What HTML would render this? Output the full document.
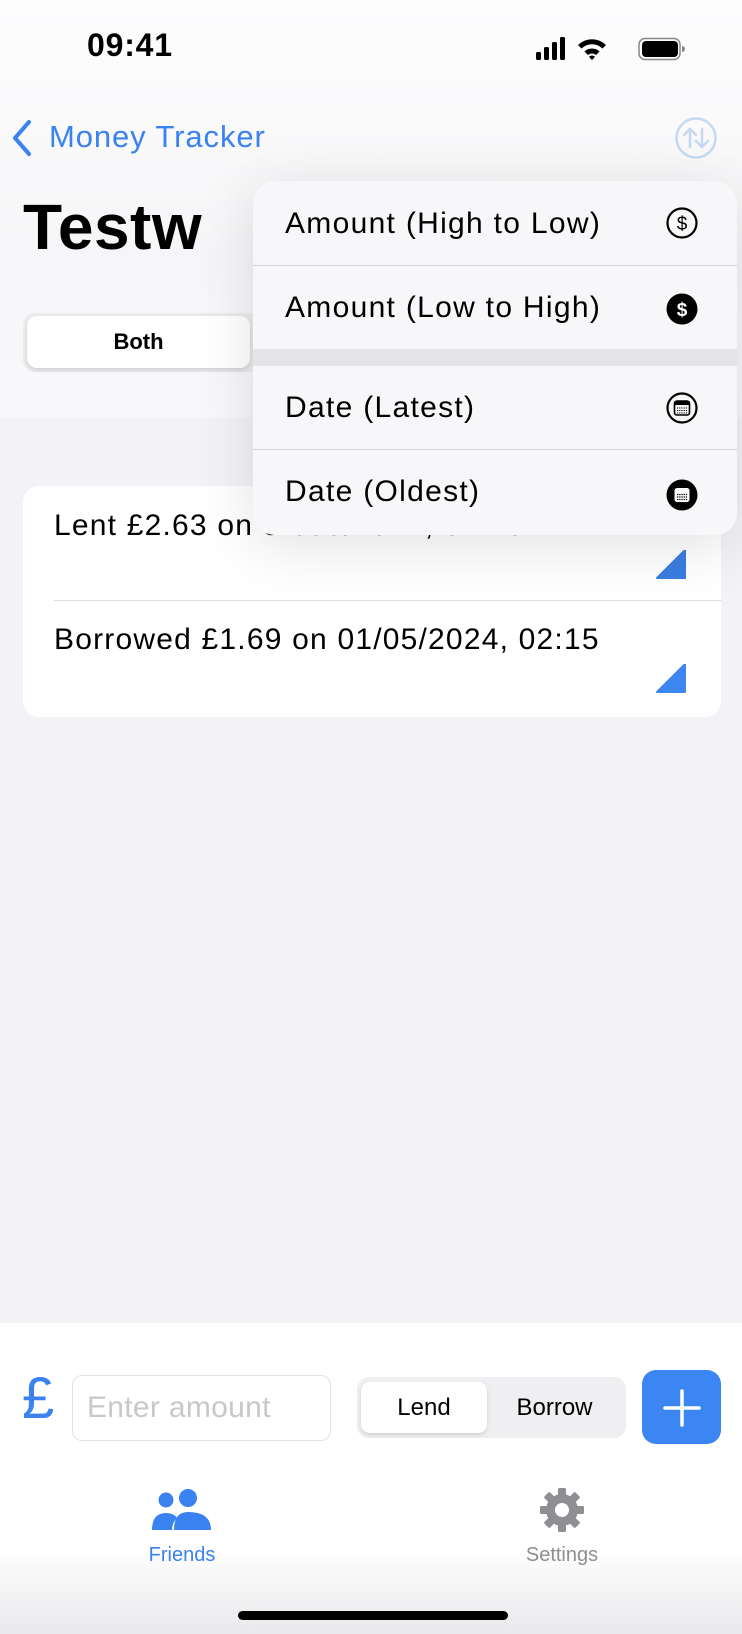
<!DOCTYPE html>
<html><head><meta charset="utf-8"><style>
*{margin:0;padding:0;box-sizing:border-box}
body{width:742px;height:1634px;position:relative;overflow:hidden;background:#f3f3f7;font-family:"Liberation Sans",sans-serif;color:#000}
.abs{position:absolute;white-space:nowrap}
</style></head><body>
<div class="abs" style="left:0;top:0;width:742px;height:417px;background:linear-gradient(#fdfdfe,#f6f6f8 60%,#f8f8fa)"></div>
<div class="abs" style="left:87px;top:27px;font-size:32px;font-weight:bold;letter-spacing:0.8px">09:41</div>
<svg class="abs" style="left:536px;top:36px" width="150" height="26" viewBox="0 0 150 26">
<rect x="0" y="16" width="5" height="8" rx="1.5"/><rect x="8" y="11" width="5" height="13" rx="1.5"/><rect x="16" y="6" width="5" height="18" rx="1.5"/><rect x="24" y="1" width="5" height="23" rx="1.5"/>
<path d="M42 9 A20 20 0 0 1 70 9 L66.5 12.5 A15 15 0 0 0 45.5 12.5Z M48.5 15.5 A11 11 0 0 1 63.5 15.5 L60 19 A6 6 0 0 0 52 19Z M56 24 L53 20.8 A4 4 0 0 1 59 20.8Z"/>
<rect x="103" y="2.5" width="41" height="21" rx="6" fill="none" stroke="#888" stroke-width="1.5"/><rect x="106" y="5" width="36" height="16" rx="4"/><path d="M146 10 v6 a3 3 0 0 0 0 -6z" fill="#888"/>
</svg>
<svg class="abs" style="left:10px;top:118px" width="24" height="40" viewBox="0 0 24 40"><path d="M19 4 L5 20 L19 36" fill="none" stroke="#3a82f0" stroke-width="4" stroke-linecap="round" stroke-linejoin="round"/></svg>
<div class="abs" style="left:49px;top:119px;font-size:31px;letter-spacing:0.9px;color:#3a82f0">Money Tracker</div>
<svg class="abs" style="left:674px;top:116px" width="44" height="44" viewBox="0 0 44 44"><circle cx="22" cy="22" r="19.5" fill="none" stroke="#c6d9f2" stroke-width="2.5"/><path d="M16 31V13M10 19l6-6 6 6M28 13v18M22 25l6 6 6-6" fill="none" stroke="#c6d9f2" stroke-width="2.5" stroke-linecap="round" stroke-linejoin="round"/></svg>
<div class="abs" style="left:23px;top:190px;font-size:64px;font-weight:bold;letter-spacing:0.5px">Testw</div>
<div class="abs" style="left:23px;top:313px;width:260px;height:59px;border-radius:12px;background:#ececef"></div>
<div class="abs" style="left:27px;top:316px;width:223px;height:52px;border-radius:10px;background:#fff;box-shadow:0 2px 4px rgba(0,0,0,.12);text-align:center;line-height:52px;font-size:22px;font-weight:bold">Both</div>
<div class="abs" style="left:23px;top:486px;width:698px;height:231px;border-radius:16px;background:#fff"></div>
<div class="abs" style="left:54px;top:509px;font-size:30px;letter-spacing:1.2px">Lent £2.63 on 01/05/2024, 02:15</div>
<svg class="abs" style="left:655px;top:550px" width="32" height="30"><path d="M30 0 V28 H2 Z" fill="#3a7de0" stroke="#3a7de0" stroke-width="2" stroke-linejoin="round"/></svg>
<div class="abs" style="left:54px;top:600px;width:667px;height:1px;background:#ddd"></div>
<div class="abs" style="left:54px;top:623px;font-size:30px;letter-spacing:1.2px">Borrowed £1.69 on 01/05/2024, 02:15</div>
<svg class="abs" style="left:655px;top:664px" width="32" height="30"><path d="M30 0 V28 H2 Z" fill="#3d86f0" stroke="#3d86f0" stroke-width="2" stroke-linejoin="round"/></svg>
<div class="abs" style="left:253px;top:181px;width:484px;height:354px;border-radius:22px;background:#f7f7f9;box-shadow:0 10px 60px rgba(0,0,0,.12);overflow:hidden">
 <div style="height:85px;line-height:85px;padding-left:32px;font-size:30px;letter-spacing:1.3px;border-bottom:1px solid #d4d4d8">Amount (High to Low)</div>
 <div style="height:83px;line-height:83px;padding-left:32px;font-size:30px;letter-spacing:1.3px">Amount (Low to High)</div>
 <div style="height:17px;background:#e4e4e8"></div>
 <div style="height:84px;line-height:84px;padding-left:32px;font-size:30px;letter-spacing:1.3px;border-bottom:1px solid #d4d4d8">Date (Latest)</div>
 <div style="height:84px;line-height:84px;padding-left:32px;font-size:30px;letter-spacing:1.3px">Date (Oldest)</div>
</div>
<svg class="abs" style="left:666px;top:207px" width="32" height="32" viewBox="0 0 32 32"><circle cx="16" cy="16" r="14.5" fill="none" stroke="#000" stroke-width="2.2"/><text x="16" y="23" text-anchor="middle" font-size="19" font-family="Liberation Sans">$</text></svg>
<svg class="abs" style="left:666px;top:293px" width="32" height="32" viewBox="0 0 32 32"><circle cx="16" cy="16" r="15.5"/><text x="16" y="23" text-anchor="middle" font-size="19" font-weight="bold" fill="#fff" font-family="Liberation Sans">$</text></svg>
<svg class="abs" style="left:666px;top:392px" width="32" height="32" viewBox="0 0 32 32"><circle cx="16" cy="16" r="14.5" fill="none" stroke="#000" stroke-width="2.2"/><rect x="8.5" y="9" width="15" height="14" rx="2.5" fill="none" stroke="#000" stroke-width="1.6"/><rect x="8.5" y="9" width="15" height="4" fill="#000"/><path d="M11 16h10M11 18.5h10M11 21h10" stroke="#000" stroke-width="1" stroke-dasharray="1.2 1"/></svg>
<svg class="abs" style="left:666px;top:479px" width="32" height="32" viewBox="0 0 32 32"><circle cx="16" cy="16" r="15.5"/><rect x="8.5" y="9" width="15" height="14" rx="2.5" fill="#fff"/><path d="M11 15.5h10M11 18h10M11 20.5h10" stroke="#000" stroke-width="1.2" stroke-dasharray="1.3 0.9"/></svg>
<div class="abs" style="left:0;top:1323px;width:742px;height:311px;background:linear-gradient(#fff 0,#fff 72%,#e9e9ec)"></div>
<div class="abs" style="left:22px;top:1365px;font-size:58px;color:#3a82f0">£</div>
<div class="abs" style="left:72px;top:1375px;width:259px;height:66px;border:1px solid #e3e3e6;border-radius:10px;background:#fff;padding-left:14px;line-height:64px;font-size:30px;letter-spacing:0.3px;color:#c8c8cc">Enter amount</div>
<div class="abs" style="left:357px;top:1377px;width:269px;height:61px;border-radius:12px;background:#efeff2"></div>
<div class="abs" style="left:361px;top:1382px;width:126px;height:51px;border-radius:9px;background:#fff;box-shadow:0 2px 4px rgba(0,0,0,.12);text-align:center;line-height:51px;font-size:24px">Lend</div>
<div class="abs" style="left:487px;top:1382px;width:135px;height:51px;text-align:center;line-height:51px;font-size:24px">Borrow</div>
<div class="abs" style="left:642px;top:1370px;width:79px;height:74px;border-radius:14px;background:#3b86f2"></div>
<svg class="abs" style="left:662px;top:1388px" width="40" height="40"><path d="M20 3v34M3 20h34" stroke="#fff" stroke-width="3.5" stroke-linecap="round"/></svg>
<svg class="abs" style="left:150px;top:1488px" width="64" height="42" viewBox="0 0 64 42"><circle cx="16" cy="12" r="7.5" fill="#3a82f0"/><circle cx="38" cy="10" r="9" fill="#3a82f0"/><path d="M2 42 Q2 25 16 25 Q24 25 27 30 Q22 35 22 42Z" fill="#3a82f0"/><path d="M24 42 Q24 24 38 24 Q61 24 61 42Z" fill="#3a82f0"/></svg>
<div class="abs" style="left:130px;top:1544px;width:104px;text-align:center;font-size:20px;color:#3a82f0">Friends</div>
<svg class="abs" style="left:538px;top:1486px" width="48" height="48" viewBox="0 0 48 48"><g fill="#8e8e93"><circle cx="24" cy="24" r="16"/><g id="t"><rect x="20" y="2" width="8" height="10" rx="1.5"/><rect x="20" y="36" width="8" height="10" rx="1.5"/></g><use href="#t" transform="rotate(45 24 24)"/><use href="#t" transform="rotate(90 24 24)"/><use href="#t" transform="rotate(135 24 24)"/></g><circle cx="24" cy="24" r="7" fill="#fff"/></svg>
<div class="abs" style="left:510px;top:1544px;width:104px;text-align:center;font-size:20px;color:#8e8e93">Settings</div>
<div class="abs" style="left:238px;top:1611px;width:270px;height:9px;border-radius:5px;background:#000"></div>
</body></html>
